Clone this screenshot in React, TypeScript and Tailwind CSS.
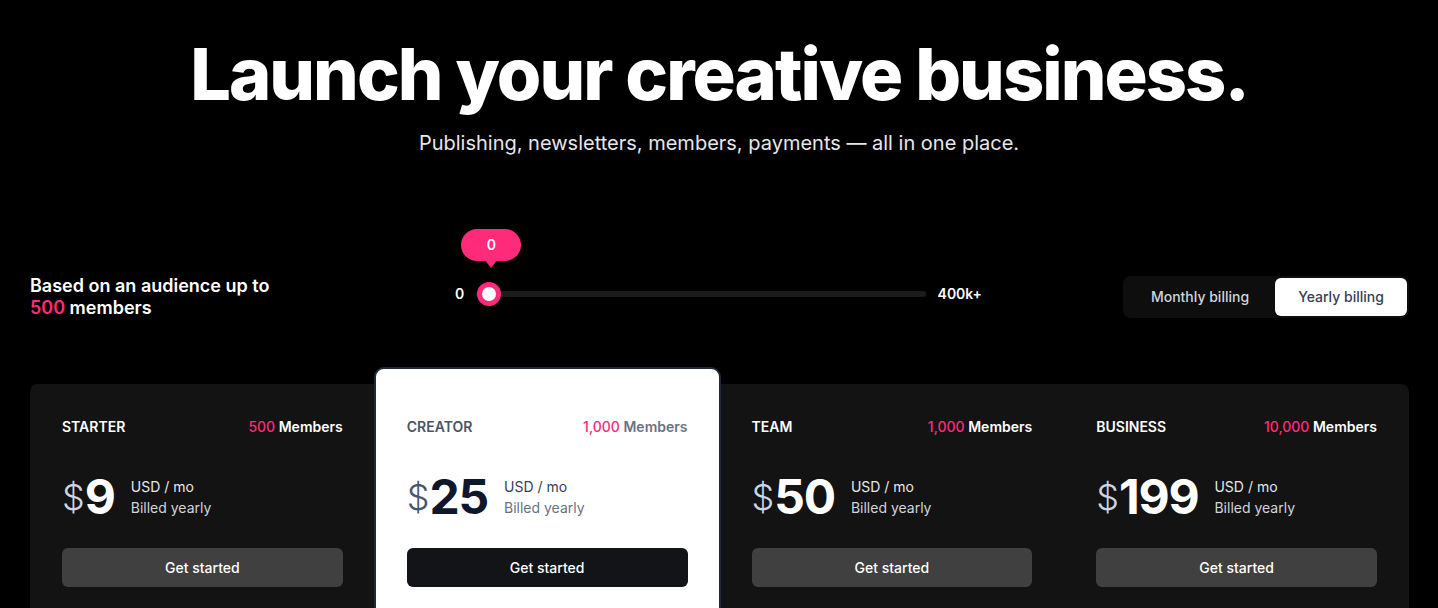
import React, { useState } from 'react';

const PLANS = [
  { name: 'STARTER', members: '500', price: '9', featured: false },
  { name: 'CREATOR', members: '1,000', price: '25', featured: true },
  { name: 'TEAM', members: '1,000', price: '50', featured: false },
  { name: 'BUSINESS', members: '10,000', price: '199', featured: false },
];

const App: React.FC = () => {
  const [yearly, setYearly] = useState(true);

  return (
    <div className="min-h-screen bg-black text-white overflow-hidden" style={{ fontFamily: 'Inter, "Noto Sans", sans-serif' }}>
      <div className="px-[30px] pt-[38px]">
        {/* Hero */}
        <header className="text-center">
          <h1 className="text-7xl leading-[72px] font-extrabold tracking-[-0.027em]">Launch your creative business.</h1>
          <p className="mt-[19px] text-xl leading-7 text-gray-200">Publishing, newsletters, members, payments — all in one place.</p>
        </header>

        {/* Audience + billing */}
        <div className="mt-[118px] flex items-center">
          <div className="w-[425px] text-lg font-semibold leading-[22px]">
            <p>Based on an audience up to</p>
            <p><span className="text-[#ff2a7a]">500</span> members</p>
          </div>

          <div className="mb-[6px] flex w-[527px] items-center gap-3 text-sm font-semibold">
            <span>0</span>
            <div className="relative flex-1 h-[6px] rounded-full bg-[#1c1c1c]">
              <div className="absolute left-[1px] top-1/2 -translate-y-1/2 w-[24px] h-[24px] rounded-full bg-[#ff2a7a] flex items-center justify-center">
                <div className="w-[14px] h-[14px] rounded-full bg-white" />
              </div>
              <div className="absolute left-[-15px] top-[-62px] w-[60px] h-[32px] rounded-full bg-[#ff2a7a] flex items-center justify-center text-sm font-semibold">
                0
                <div className="absolute left-1/2 -translate-x-1/2 top-[30px] w-0 h-0 border-l-[7px] border-r-[7px] border-t-[9px] border-l-transparent border-r-transparent border-t-[#ff2a7a]" />
              </div>
            </div>
            <span>400k+</span>
          </div>

          <div className="ml-auto mr-[-1px] flex h-[42px] w-[286px] items-stretch rounded-lg bg-[#0e0e0e] p-[2px] text-sm font-medium">
            <button
              onClick={() => setYearly(false)}
              className={`w-[150px] rounded-md ${!yearly ? 'bg-white text-gray-700' : 'text-gray-300'}`}
            >
              Monthly billing
            </button>
            <button
              onClick={() => setYearly(true)}
              className={`flex-1 rounded-md ${yearly ? 'bg-white text-gray-700' : 'text-gray-300'}`}
            >
              Yearly billing
            </button>
          </div>
        </div>

        {/* Plans */}
        <div className="mt-[65px] mr-[-1px] grid grid-cols-4 rounded-lg bg-[#131313]">
          {PLANS.map(plan => (
            <div
              key={plan.name}
              className={
                plan.featured
                  ? '-mt-[17px] -mx-[1px] rounded-t-[10px] border-2 border-[#1e293b] bg-white px-[31px] pt-[48px] pb-10'
                  : 'px-8 pt-[33px] pb-10'
              }
            >
              <div className="flex items-center justify-between text-sm leading-5 font-semibold">
                <span className={plan.featured ? 'text-gray-600' : 'text-white'}>{plan.name}</span>
                <span>
                  <span className="text-[#ff2a7a] font-medium">{plan.members}</span>{' '}
                  <span className={plan.featured ? 'text-gray-500' : 'text-white'}>Members</span>
                </span>
              </div>

              <div className="mt-[36px] flex items-center">
                <span className={`text-[36px] leading-none font-light ${plan.featured ? 'text-slate-600' : 'text-slate-300'}`}>$</span>
                <span className={`text-5xl leading-none font-bold tracking-tight ${plan.featured ? 'text-slate-900' : 'text-white'}`}>{plan.price}</span>
                <div className="ml-4 text-sm leading-[21px]">
                  <p className={plan.featured ? 'text-gray-700' : 'text-gray-200'}>USD / mo</p>
                  <p className={plan.featured ? 'text-gray-500' : 'text-gray-300'}>Billed yearly</p>
                </div>
              </div>

              <button
                className={`mt-[27px] h-[39px] w-full rounded-md text-sm font-medium text-white ${
                  plan.featured ? 'bg-[#131417]' : 'bg-[#404040]'
                }`}
              >
                Get started
              </button>
            </div>
          ))}
        </div>
      </div>
    </div>
  );
};

export default App;
